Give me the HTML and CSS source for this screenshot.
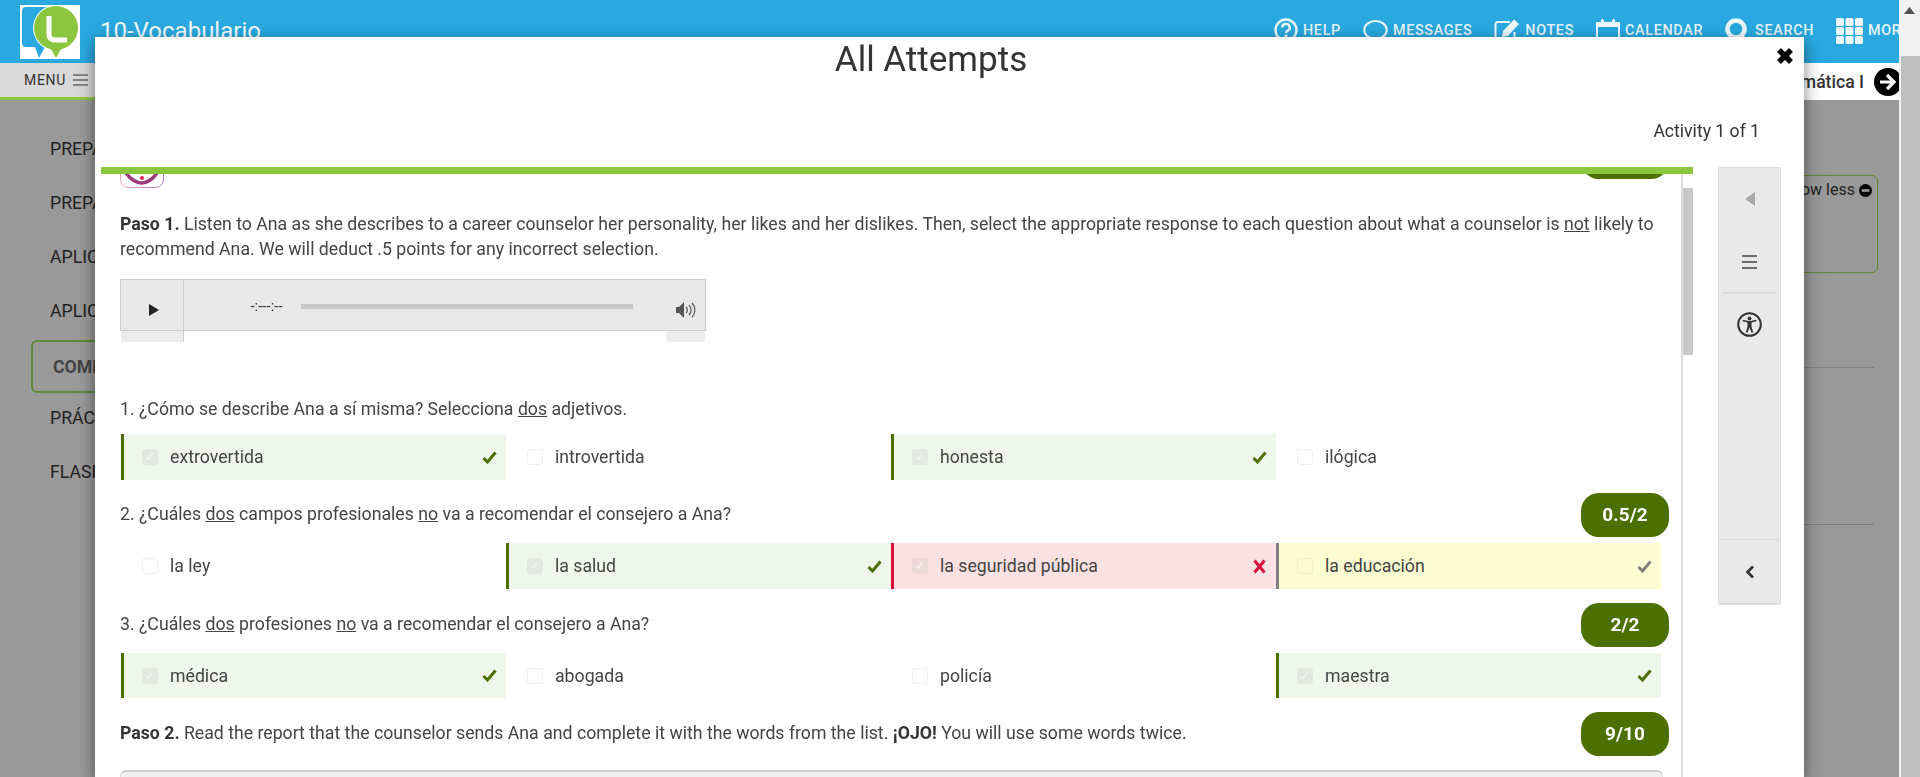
FILE: index.html
```html
<!DOCTYPE html>
<html lang="en">
<head>
<meta charset="utf-8">
<title>All Attempts</title>
<link rel="stylesheet" href="styles.css">
</head>
<body>
<div class="page">
  <header class="topbar">
    <svg class="logo" viewBox="0 0 60 54" width="60" height="54">
      <rect width="60" height="54" fill="#fff"/>
      <path d="M6 2h26v40H25l-6 11-4-11H6a4 4 0 0 1-4-4V6a4 4 0 0 1 4-4z" fill="#29a9e0"/>
      <circle cx="36" cy="23" r="23" fill="#fff"/>
      <path d="M31 44l5 9 5-9z" fill="#8cc63f"/>
      <circle cx="36" cy="23" r="22" fill="#8cc63f"/>
      <path d="M29 11v18q0 6 6 6h12" fill="none" stroke="#fff" stroke-width="5"/>
    </svg>
    <div class="course-title">10-Vocabulario</div>
    <nav class="topnav">
      <a class="nav-item">
        <svg width="24" height="24" viewBox="0 0 24 24"><circle cx="12" cy="12" r="10.5" fill="none" stroke="#eef7fc" stroke-width="2.4"/><path d="M8.2 9.4a3.8 3.5 0 1 1 5.6 3.1c-1.2.7-1.8 1.3-1.8 2.6" fill="none" stroke="#eef7fc" stroke-width="2.4"/><rect x="10.6" y="16.6" width="2.8" height="2.8" fill="#eef7fc"/></svg>
        <span>HELP</span>
      </a>
      <a class="nav-item">
        <svg width="25" height="24" viewBox="0 0 25 24"><ellipse cx="12.5" cy="12" rx="11.2" ry="9" fill="none" stroke="#eef7fc" stroke-width="2"/></svg>
        <span>MESSAGES</span>
      </a>
      <a class="nav-item">
        <svg width="26" height="24" viewBox="0 0 26 24"><path d="M16 4H4a2.500 2.500 0 0 0-2.500 2.500v15A2.500 2.500 0 0 0 4 24h14a2.500 2.500 0 0 0 2.500-2.500V14" fill="none" stroke="#eef7fc" stroke-width="2"/><path d="M8 19l1-6L20 1.500l5 4.500L14 18z" fill="#eef7fc"/></svg>
        <span>NOTES</span>
      </a>
      <a class="nav-item">
        <svg width="24" height="30" viewBox="0 0 24 30"><path d="M1 5h22v25H1z" fill="none" stroke="#eef7fc" stroke-width="2"/><rect x="1" y="5" width="22" height="4" fill="#eef7fc"/><rect x="5" y="1" width="3" height="8" rx="1.500" fill="#eef7fc"/><rect x="16" y="1" width="3" height="8" rx="1.500" fill="#eef7fc"/></svg>
        <span>CALENDAR</span>
      </a>
      <a class="nav-item">
        <svg width="25" height="24" viewBox="0 0 25 24"><circle cx="11" cy="11" r="8.500" fill="none" stroke="#eef7fc" stroke-width="4.500"/><path d="M16 17l4 6" stroke="#eef7fc" stroke-width="4.500"/></svg>
        <span>SEARCH</span>
      </a>
      <a class="nav-item">
        <svg width="27" height="26" viewBox="0 0 27 26"><g fill="#eef7fc"><rect width="8" height="8" rx="1.500"/><rect x="9.500" width="8" height="8" rx="1.500"/><rect x="19" width="8" height="8" rx="1.500"/><rect y="9" width="8" height="8" rx="1.500"/><rect x="9.500" y="9" width="8" height="8" rx="1.500"/><rect x="19" y="9" width="8" height="8" rx="1.500"/><rect y="18" width="8" height="8" rx="1.500"/><rect x="9.500" y="18" width="8" height="8" rx="1.500"/><rect x="19" y="18" width="8" height="8" rx="1.500"/></g></svg>
        <span>MORE</span>
      </a>
    </nav>
  </header>

  <div class="menubar">
    <div class="menu-left">
      <span class="menu-label">MENU</span>
      <svg width="15" height="12" viewBox="0 0 15 12"><path d="M0 1h15M0 6h15M0 11h15" stroke="#333" stroke-width="1.200"/></svg>
    </div>
    <div class="menu-right">
      <span class="next-label">Gramática I</span>
      <svg class="next-arrow" width="28" height="28" viewBox="0 0 28 28"><circle cx="14" cy="14" r="14" fill="#000"/><path d="M6 14h13M13 7l7 7-7 7" fill="none" stroke="#fff" stroke-width="3.200"/></svg>
    </div>
  </div>

  <main class="backdrop">
    <ul class="activity-list">
      <li class="activity">PREPARACIÓN</li>
      <li class="activity">PREPARACIÓN</li>
      <li class="activity">APLICACIÓN</li>
      <li class="activity">APLICACIÓN</li>
      <li class="activity activity-current">COMPRENSIÓN</li>
      <li class="activity">PRÁCTICA</li>
      <li class="activity">FLASHCARDS</li>
    </ul>
    <aside class="details">
      <div class="info-box">
        <span>Show less</span>
        <svg width="13" height="13" viewBox="0 0 12 12"><circle cx="6" cy="6" r="6" fill="#000"/><rect x="2.500" y="4.800" width="7" height="2.400" fill="#999"/></svg>
      </div>
      <div class="rule rule-first"></div>
      <div class="rule rule-second"></div>
    </aside>
  </main>
</div>

<div class="scrollbar">
  <div class="scroll-head"><svg width="11" height="7" viewBox="0 0 11 7"><path d="M5.500 0l5.500 7H0z" fill="#505050"/></svg></div>
  <div class="scroll-thumb"></div>
</div>

<section class="modal">
  <h1 class="modal-title">All Attempts</h1>
  <svg class="modal-close" width="18" height="18" viewBox="0 0 18 18"><path d="M3 3l12 12M15 3L3 15" stroke="#000" stroke-width="5.500"/></svg>
  <div class="activity-count">Activity 1 of 1</div>
  <div class="modal-body">
    <div class="attempt">
      <div class="attempt-scroll">
        <div class="peek">
          <svg width="44" height="14" viewBox="0 0 44 14"><defs><linearGradient id="badge-edge"><stop offset="0" stop-color="#f2a0a8"/><stop offset="1" stop-color="#b07cc0"/></linearGradient></defs><rect x=".5" y="-30" width="43" height="43.500" rx="8" fill="#fff" stroke="url(#badge-edge)"/><path d="M5 -2Q22 20 38 -2" fill="none" stroke="#9c3a7c" stroke-width="3.500"/><circle cx="22" cy="4" r="2" fill="#e0245e"/></svg>
          <div class="peek-pill"><div class="pill">&nbsp;</div></div>
        </div>

        <p class="lead"><b>Paso 1.</b> Listen to Ana as she describes to a career counselor her personality, her likes and her dislikes. Then, select the appropriate response to each question about what a counselor is <u>not</u> likely to recommend Ana. We will deduct .5 points for any incorrect selection.</p>

        <div class="audio">
          <div class="audio-bar">
            <div class="audio-play"><svg width="10" height="12" viewBox="0 0 10 12"><path d="M0 0l10 6-10 6z" fill="#222"/></svg></div>
            <div class="audio-time">-:---:--</div>
            <div class="audio-track"></div>
            <svg class="audio-volume" width="21" height="18" viewBox="0 0 21 18"><path d="M0 6h3l5-5v16l-5-5H0z" fill="#555"/><path d="M10 6a4 4 0 0 1 0 6M13 4a7 7 0 0 1 0 10M16 2a10 10 0 0 1 0 14" fill="none" stroke="#555" stroke-width="1.200"/></svg>
          </div>
          <div class="audio-foot">
            <div class="foot-left"></div>
            <div class="foot-right"></div>
          </div>
        </div>

        <div class="question question-first"><span>1. ¿Cómo se describe Ana a sí misma? Selecciona <u>dos</u> adjetivos.</span></div>
        <div class="options">
          <div class="option is-correct"><span class="cb cb-on">✓</span><span class="opt-text">extrovertida</span><svg class="mark" width="15" height="13" viewBox="0 0 15 13"><path d="M1.500 7l4 4L13.500 1.500" fill="none" stroke="#4b7000" stroke-width="3"/></svg></div>
          <div class="option"><span class="cb"></span><span class="opt-text">introvertida</span></div>
          <div class="option is-correct"><span class="cb cb-on">✓</span><span class="opt-text">honesta</span><svg class="mark" width="15" height="13" viewBox="0 0 15 13"><path d="M1.500 7l4 4L13.500 1.500" fill="none" stroke="#4b7000" stroke-width="3"/></svg></div>
          <div class="option"><span class="cb"></span><span class="opt-text">ilógica</span></div>
        </div>

        <div class="question question-scored"><span>2. ¿Cuáles <u>dos</u> campos profesionales <u>no</u> va a recomendar el consejero a Ana?</span><div class="pill">0.5/2</div></div>
        <div class="options">
          <div class="option"><span class="cb"></span><span class="opt-text">la ley</span></div>
          <div class="option is-correct"><span class="cb cb-on">✓</span><span class="opt-text">la salud</span><svg class="mark" width="15" height="13" viewBox="0 0 15 13"><path d="M1.500 7l4 4L13.500 1.500" fill="none" stroke="#4b7000" stroke-width="3"/></svg></div>
          <div class="option is-wrong"><span class="cb cb-on">✓</span><span class="opt-text">la seguridad pública</span><svg class="mark" width="15" height="15" viewBox="0 0 15 15"><path d="M2.500 1.500l10 12M12.500 1.500l-10 12" fill="none" stroke="#d8103a" stroke-width="3"/></svg></div>
          <div class="option is-missed"><span class="cb"></span><span class="opt-text">la educación</span><svg class="mark" width="15" height="13" viewBox="0 0 15 13"><path d="M1.500 7l4 4L13.500 1.500" fill="none" stroke="#808080" stroke-width="3"/></svg></div>
        </div>

        <div class="question question-scored question-third"><span>3. ¿Cuáles <u>dos</u> profesiones <u>no</u> va a recomendar el consejero a Ana?</span><div class="pill">2/2</div></div>
        <div class="options options-short">
          <div class="option is-correct"><span class="cb cb-on">✓</span><span class="opt-text">médica</span><svg class="mark" width="15" height="13" viewBox="0 0 15 13"><path d="M1.500 7l4 4L13.500 1.500" fill="none" stroke="#4b7000" stroke-width="3"/></svg></div>
          <div class="option"><span class="cb"></span><span class="opt-text">abogada</span></div>
          <div class="option"><span class="cb"></span><span class="opt-text">policía</span></div>
          <div class="option is-correct"><span class="cb cb-on">✓</span><span class="opt-text">maestra</span><svg class="mark" width="15" height="13" viewBox="0 0 15 13"><path d="M1.500 7l4 4L13.500 1.500" fill="none" stroke="#4b7000" stroke-width="3"/></svg></div>
        </div>

        <div class="question question-scored question-third"><span><b>Paso 2.</b> Read the report that the counselor sends Ana and complete it with the words from the list. <b>¡OJO!</b> You will use some words twice.</span><div class="pill">9/10</div></div>
        <div class="word-box"></div>
      </div>
      <div class="inner-scroll"><div class="inner-thumb"></div></div>
    </div>

    <aside class="side-panel">
      <div class="side-cell side-prev"><svg width="10" height="14" viewBox="0 0 10 14"><path d="M10 0v14L0 7z" fill="#a9a9a9"/></svg></div>
      <div class="side-cell side-toc"><svg width="15" height="14" viewBox="0 0 15 14"><path d="M0 1h15M0 7h15M0 13h15" stroke="#444" stroke-width="1.400"/></svg></div>
      <div class="side-cell side-access">
        <svg width="25" height="25" viewBox="0 0 25 25"><circle cx="12.500" cy="12.500" r="11.300" fill="none" stroke="#333" stroke-width="2"/><circle cx="12.500" cy="6.500" r="1.900" fill="#333"/><path d="M5.500 9.200l5 1.300v4l-1.700 6h1.800l1.900-5 1.900 5h1.800l-1.700-6v-4l5-1.300-.4-1.400-5.600 1.200h-2l-5.600-1.200z" fill="#333"/></svg>
      </div>
      <div class="side-cell side-collapse"><svg width="10" height="14" viewBox="0 0 10 14"><path d="M8 1.500L2.500 7 8 12.500" fill="none" stroke="#333" stroke-width="2.600"/></svg></div>
    </aside>
  </div>
</section>
</body>
</html>
```

FILE: styles.css
```css
* { box-sizing: border-box; }

html, body {
  margin: 0;
  height: 777px;
  overflow: hidden;
}

body {
  font-family: Roboto, "Liberation Sans", sans-serif;
  font-size: 17.7px;
  color: #444;
  background: #999;
  display: flex;
}

.page {
  width: 1899px;
  height: 777px;
  flex: none;
  display: flex;
  flex-direction: column;
  overflow: hidden;
}

/* top bar */
.topbar {
  height: 63px;
  flex: none;
  background: #29a9e0;
  display: flex;
  align-items: flex-start;
  padding: 5px 0 0 20px;
  overflow: hidden;
}

.logo { flex: none; }

.course-title {
  margin: 12px 0 0 20px;
  width: 158px;
  flex: none;
  font-size: 24px;
  line-height: 28px;
  color: #f2f9fd;
  white-space: nowrap;
}

.topnav {
  margin-left: 1016px;
  flex: none;
  display: flex;
  gap: 22px;
  padding-top: 13px;
}

.nav-item {
  display: flex;
  align-items: flex-start;
  gap: 5px;
  color: #e6f4fb;
  font-size: 14.4px;
  font-weight: 500;
  letter-spacing: .65px;
  line-height: 26px;
  white-space: nowrap;
}

.nav-item svg { flex: none; }

/* menu bar */
.menubar {
  height: 37px;
  flex: none;
  display: flex;
  justify-content: space-between;
}

.menu-left {
  width: 800px;
  height: 37px;
  background: #d9d9d9;
  border-bottom: 3px solid #8cc63f;
  padding-left: 24px;
  display: flex;
  align-items: center;
  gap: 7px;
}

.menu-label {
  font-size: 14px;
  letter-spacing: .7px;
  color: #333;
}

.menu-right {
  flex: 1;
  background: #fff;
  display: flex;
  justify-content: flex-end;
  align-items: flex-start;
  gap: 10px;
  padding-top: 5px;
  overflow: hidden;
}

.next-label {
  font-size: 17.6px;
  font-weight: 500;
  line-height: 28px;
  color: #333;
}

.next-arrow {
  flex: none;
  margin-right: -3px;
}

/* page behind the modal */
.backdrop {
  flex: 1;
  background: #999;
  display: flex;
  justify-content: space-between;
  padding: 22px 21px 0 31px;
}

.activity-list {
  margin: 0;
  padding: 0;
  list-style: none;
  color: #222;
}

.activity {
  height: 54px;
  line-height: 54px;
  padding-left: 19px;
  white-space: nowrap;
}

.activity-current {
  width: 400px;
  height: 53px;
  line-height: 50px;
  margin: 2px 0 -2px;
  padding-left: 20px;
  border: 2px solid #5f8a2e;
  border-radius: 6px;
  font-weight: 700;
  color: #444;
}

.details {
  width: 300px;
  padding-top: 53px;
}

.info-box {
  height: 98px;
  border: 1px solid #5f8a2e;
  border-radius: 6px;
  padding: 5px 5px 0 0;
  display: flex;
  justify-content: flex-end;
  align-items: flex-start;
  gap: 4px;
  font-size: 16px;
  line-height: 18px;
  color: #222;
}

.info-box svg { margin-top: 3px; }

.rule {
  height: 1px;
  margin-right: 4px;
  background: #7f7f7f;
}

.rule-first { margin-top: 94px; }
.rule-second { margin-top: 156px; }

/* window scrollbar */
.scrollbar {
  width: 21px;
  height: 777px;
  flex: none;
  background: #f1f1f1;
  display: flex;
  flex-direction: column;
  align-items: center;
}

.scroll-head {
  height: 56px;
  padding-top: 7px;
  line-height: 0;
}

.scroll-thumb {
  flex: 1;
  width: 19px;
  margin-left: 2px;
  background: #bfbfbf;
}

/* modal */
.modal {
  position: fixed;
  left: 95px;
  top: 37px;
  width: 1709px;
  height: 740px;
  background: #fff;
  box-shadow: 0 5px 15px rgba(0, 0, 0, .5);
  display: flex;
  flex-direction: column;
}

.modal-title {
  margin: 0;
  height: 46px;
  padding-right: 37px;
  text-align: center;
  font-size: 35px;
  font-weight: 400;
  line-height: 46px;
  color: #333;
}

.modal-close {
  position: absolute;
  top: 10px;
  right: 10px;
}

.activity-count {
  margin-top: 36px;
  height: 48px;
  padding-right: 44px;
  text-align: right;
  font-size: 17.6px;
  line-height: 25px;
  color: #333;
}

.modal-body {
  flex: 1;
  min-height: 0;
  display: flex;
  align-items: flex-start;
  padding-left: 6px;
}

.attempt {
  width: 1592px;
  height: 610px;
  flex: none;
  border-top: 7px solid #8cc63f;
  display: flex;
}

.attempt-scroll {
  width: 1580px;
  flex: none;
  padding: 0 12px 0 19px;
  overflow: hidden;
}

.inner-scroll {
  flex: 1;
  background: #fff;
  border-left: 2px solid #ddd;
}

.inner-thumb {
  margin-top: 14px;
  height: 167px;
  background: #c8c8c8;
}

.peek {
  height: 14px;
  display: flex;
  justify-content: space-between;
}

.peek-pill {
  height: 5px;
  display: flex;
  align-items: flex-end;
  overflow: hidden;
}

.pill {
  width: 88px;
  height: 44px;
  flex: none;
  border-radius: 18px;
  background: #4b7000;
  color: #fff;
  font-size: 19px;
  font-weight: 700;
  line-height: 44px;
  text-align: center;
}

.lead {
  margin: 24px 0 0;
  line-height: 25px;
  width: 1540px;
}

.lead b, .question b { color: #333; }

/* audio */
.audio {
  width: 586px;
  margin-top: 17px;
}

.audio-bar {
  height: 52px;
  background: #e8e8e8;
  border: 1px solid #ccc;
  display: flex;
  align-items: center;
}

.audio-play {
  width: 63px;
  height: 50px;
  flex: none;
  border-right: 1px solid #ccc;
  display: flex;
  justify-content: center;
  align-items: center;
  padding: 10px 0 0 4px;
}

.audio-time {
  width: 117px;
  flex: none;
  margin-top: 2px;
  padding-left: 48px;
  text-align: center;
  font-size: 15px;
  line-height: 16px;
  color: #333;
}

.audio-track {
  width: 332px;
  height: 5px;
  flex: none;
  margin-top: 2px;
  background: #c6c6c6;
}

.audio-volume {
  margin-left: 43px;
  margin-top: 10px;
  flex: none;
}

.audio-foot {
  height: 11px;
  display: flex;
  justify-content: space-between;
  padding: 0 1px;
}

.foot-left {
  width: 63px;
  background: #ececec;
  border-right: 1px solid #ccc;
}

.foot-right {
  width: 39px;
  background: #ececec;
}

/* questions */
.question {
  display: flex;
  justify-content: space-between;
  align-items: flex-start;
  line-height: 25px;
}

.question-first {
  margin-top: 55px;
  height: 37px;
}

.question-scored {
  margin-top: 13px;
  height: 50px;
}

.question-scored span { padding-top: 9px; }

.question-third { margin-top: 14px; }

.options {
  display: grid;
  grid-template-columns: repeat(4, 385px);
  margin-left: 1px;
}

.option {
  height: 46px;
  display: flex;
  align-items: center;
  padding: 0 9px 0 18px;
  border-left: 3px solid transparent;
}

.options-short .option { height: 45px; }

.opt-text { flex: 1; }

.cb {
  width: 16px;
  height: 16px;
  flex: none;
  margin-right: 12px;
  border: 1px solid #eee;
  border-radius: 3px;
  background: #fff;
  font-size: 12px;
  line-height: 14px;
  text-align: center;
  color: #f5f5f5;
}

.cb-on {
  background: #e4e8e2;
  border-color: #e4e8e2;
}

.is-correct {
  background: #eff6ec;
  border-left-color: #4b7000;
}

.is-wrong {
  background: #fbe1e2;
  border-left-color: #d8103a;
}

.is-wrong .cb-on { background: #eed9da; border-color: #eed9da; }

.is-missed {
  background: #fbfcd2;
  border-left-color: #808080;
}

.is-missed .cb { background: #fbfcd2; border-color: #f0f0d0; }

.word-box {
  width: 1543px;
  height: 30px;
  margin-top: 8px;
  background: #f0f0f0;
  border: 1px solid #ddd;
  border-top: 2px solid #ccc;
  border-radius: 6px;
}

/* side panel */
.side-panel {
  width: 63px;
  height: 438px;
  flex: none;
  margin-left: 25px;
  background: #e9e9e9;
  border: 1px solid #dcdcdc;
  border-bottom-width: 2px;
  border-radius: 2px;
  display: flex;
  flex-direction: column;
}

.side-cell {
  display: flex;
  justify-content: center;
  align-items: center;
}

.side-prev { height: 62px; }

.side-toc {
  height: 64px;
  margin: 0 3px;
  padding-top: 1px;
  border-bottom: 2px solid #dcdcdc;
}

.side-access { height: 60px; }

.side-collapse {
  margin-top: auto;
  height: 64px;
  border-top: 1px solid #dcdcdc;
}
```
